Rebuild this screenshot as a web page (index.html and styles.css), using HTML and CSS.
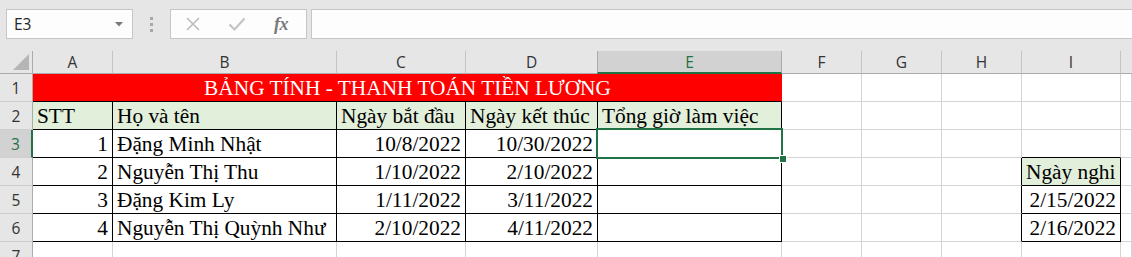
FILE: index.html
```html
<!DOCTYPE html>
<html lang="vi">
<head>
<meta charset="utf-8">
<title>Bảng tính</title>
<link rel="stylesheet" href="styles.css">
</head>
<body>
<div class="toolbar">
  <div class="namebox">
    <span class="name">E3</span>
    <svg class="dd" width="8" height="5" viewBox="0 0 8 5"><polygon points="0,0 8,0 4,4.5" fill="#7a7a7a"/></svg>
  </div>
  <div class="grip"><i></i><i></i><i></i></div>
  <div class="fbuttons">
    <svg class="ic" width="16" height="16" viewBox="0 0 16 16"><path d="M2 2 L14 14 M14 2 L2 14" stroke="#bcbcbc" stroke-width="1.6" fill="none"/></svg>
    <svg class="ic" width="18" height="16" viewBox="0 0 18 16"><path d="M1.5 8.5 L6.5 13.5 L16.5 2.5" stroke="#c4c4c4" stroke-width="2.2" fill="none"/></svg>
    <span class="fx">fx</span>
  </div>
  <div class="formula"></div>
</div>

<div class="sheet">
  <!-- header row -->
  <div class="ch corner"><svg width="16" height="16" viewBox="0 0 16 16"><polygon points="16,0 16,16 0,16" fill="#b5b5b5"/></svg></div>
  <div class="ch">A</div>
  <div class="ch">B</div>
  <div class="ch">C</div>
  <div class="ch">D</div>
  <div class="ch sel">E</div>
  <div class="ch">F</div>
  <div class="ch">G</div>
  <div class="ch">H</div>
  <div class="ch">I</div>
  <div class="ch last"></div>

  <!-- row 1 -->
  <div class="rh">1</div>
  <div class="c title">BẢNG TÍNH - THANH TOÁN TIỀN LƯƠNG</div>
  <div class="c"></div><div class="c"></div><div class="c"></div><div class="c"></div><div class="c"></div>

  <!-- row 2 -->
  <div class="rh">2</div>
  <div class="c hd bk">STT</div>
  <div class="c hd bk">Họ và tên</div>
  <div class="c hd bk">Ngày bắt đầu</div>
  <div class="c hd bk">Ngày kết thúc</div>
  <div class="c hd bk">Tổng giờ làm việc</div>
  <div class="c"></div><div class="c"></div><div class="c"></div><div class="c"></div><div class="c"></div>

  <!-- row 3 -->
  <div class="rh sel">3</div>
  <div class="c bk r">1</div>
  <div class="c bk">Đặng Minh Nhật</div>
  <div class="c bk r">10/8/2022</div>
  <div class="c bk r">10/30/2022</div>
  <div class="c bk active"><span class="selbox"><span class="handle"></span></span></div>
  <div class="c"></div><div class="c"></div><div class="c"></div><div class="c bb"></div><div class="c"></div>

  <!-- row 4 -->
  <div class="rh">4</div>
  <div class="c bk r">2</div>
  <div class="c bk">Nguyễn Thị Thu</div>
  <div class="c bk r">1/10/2022</div>
  <div class="c bk r">2/10/2022</div>
  <div class="c bk"></div>
  <div class="c"></div><div class="c"></div><div class="c br"></div>
  <div class="c hd bk">Ngày nghi</div>
  <div class="c"></div>

  <!-- row 5 -->
  <div class="rh">5</div>
  <div class="c bk r">3</div>
  <div class="c bk">Đặng Kim Ly</div>
  <div class="c bk r">1/11/2022</div>
  <div class="c bk r">3/11/2022</div>
  <div class="c bk"></div>
  <div class="c"></div><div class="c"></div><div class="c br"></div>
  <div class="c bk r">2/15/2022</div>
  <div class="c"></div>

  <!-- row 6 -->
  <div class="rh">6</div>
  <div class="c bk r">4</div>
  <div class="c bk">Nguyễn Thị Quỳnh Như</div>
  <div class="c bk r">2/10/2022</div>
  <div class="c bk r">4/11/2022</div>
  <div class="c bk"></div>
  <div class="c"></div><div class="c"></div><div class="c br"></div>
  <div class="c bk r">2/16/2022</div>
  <div class="c"></div>

  <!-- row 7 -->
  <div class="rh">7</div>
  <div class="c"></div><div class="c"></div><div class="c"></div><div class="c"></div><div class="c"></div>
  <div class="c"></div><div class="c"></div><div class="c"></div><div class="c"></div><div class="c"></div>
</div>
</body>
</html>
```

FILE: styles.css
```css
html, body {
  margin: 0;
  padding: 0;
  background: #e6e6e6;
  overflow: hidden;
}

.toolbar {
  height: 51px;
  box-sizing: border-box;
  padding: 9px 0 0 6px;
  display: flex;
  align-items: flex-start;
}

.namebox {
  width: 127px;
  height: 30px;
  box-sizing: border-box;
  border: 1px solid #c6c6c6;
  background: #fdfdfd;
  display: flex;
  align-items: center;
  justify-content: space-between;
  padding: 0 9px 0 7px;
}

.name {
  font-family: "Open Sans", "Noto Sans", sans-serif;
  font-size: 15.5px;
  color: #262626;
}

.dd { margin-top: 1px; }

.grip {
  width: 37px;
  height: 30px;
  display: flex;
  flex-direction: column;
  align-items: center;
  justify-content: center;
  gap: 3px;
}

.grip i {
  display: block;
  width: 3px;
  height: 3px;
  background: #a8a8a8;
}

.fbuttons {
  width: 137px;
  height: 30px;
  box-sizing: border-box;
  border: 1px solid #c6c6c6;
  background: #fdfdfd;
  display: flex;
  align-items: center;
  padding-left: 14px;
  gap: 27px;
}

.fx {
  font-family: "Liberation Serif", serif;
  font-style: italic;
  font-weight: bold;
  font-size: 18px;
  color: #7a7a7a;
  margin-left: 1px;
  letter-spacing: -0.5px;
}

.formula {
  margin-left: 4px;
  flex: 1;
  height: 30px;
  box-sizing: border-box;
  border: 1px solid #c6c6c6;
  border-right: none;
  background: #fdfdfd;
}

.sheet {
  display: grid;
  grid-template-columns: 33px 80px 224px 129px 132px 184px 80px 80px 80px 99px 1fr;
  grid-template-rows: 23px repeat(7, 28px);
  background: #ffffff;
}

.ch {
  background: #e6e6e6;
  border-right: 1px solid #c4c4c4;
  border-bottom: 1px solid #ababab;
  box-sizing: border-box;
  font-family: "Open Sans", "Noto Sans", sans-serif;
  font-size: 15.5px;
  color: #333333;
  text-align: center;
  line-height: 22px;
}

.ch.corner {
  display: flex;
  align-items: flex-end;
  justify-content: flex-end;
  padding: 0 3px 3px 0;
  border-right-color: #ababab;
}

.ch.corner svg { display: block; }

.ch.last { border-right: none; }

.ch.sel {
  background: #d2d2d2;
  color: #217346;
  border-right-color: #ababab;
  border-left: 1px solid #ababab;
  border-bottom: 2px solid #217346;
  margin-left: -1px;
}

.rh {
  background: #e6e6e6;
  border-right: 1px solid #ababab;
  border-bottom: 1px solid #cfcfcf;
  box-sizing: border-box;
  font-family: "Open Sans", "Noto Sans", sans-serif;
  font-size: 15.5px;
  color: #333333;
  text-align: center;
  line-height: 28px;
}

.rh.sel {
  background: #d2d2d2;
  color: #217346;
  border-right: 2px solid #217346;
}

.c {
  box-sizing: border-box;
  border-right: 1px solid #d4d4d4;
  border-bottom: 1px solid #d4d4d4;
  font-family: "Liberation Serif", "Times New Roman", serif;
  font-size: 21.33px;
  color: #000000;
  line-height: 23px;
  padding: 3px 3px 0 4px;
  white-space: nowrap;
  overflow: visible;
}

.c.r { text-align: right; padding-right: 4px; }

.c.bk {
  border-right-color: #000000;
  border-bottom-color: #000000;
}

.c.bb { border-bottom-color: #000000; }
.c.br { border-right-color: #000000; }

.c.hd { background: #e2efda; }

.c.title {
  grid-column: 2 / 7;
  background: #ff0000;
  color: #ffffff;
  text-align: center;
  border-bottom-color: #000000;
  border-right-color: #ff0000;
}

.c.active { position: relative; }

.selbox {
  position: absolute;
  top: -2px;
  left: -2px;
  right: -2px;
  bottom: -2px;
  border: 2px solid #217346;
  pointer-events: none;
}

.handle {
  position: absolute;
  right: -5px;
  bottom: -5px;
  width: 6px;
  height: 6px;
  background: #217346;
  box-shadow: 0 0 0 1px #ffffff;
}
```
